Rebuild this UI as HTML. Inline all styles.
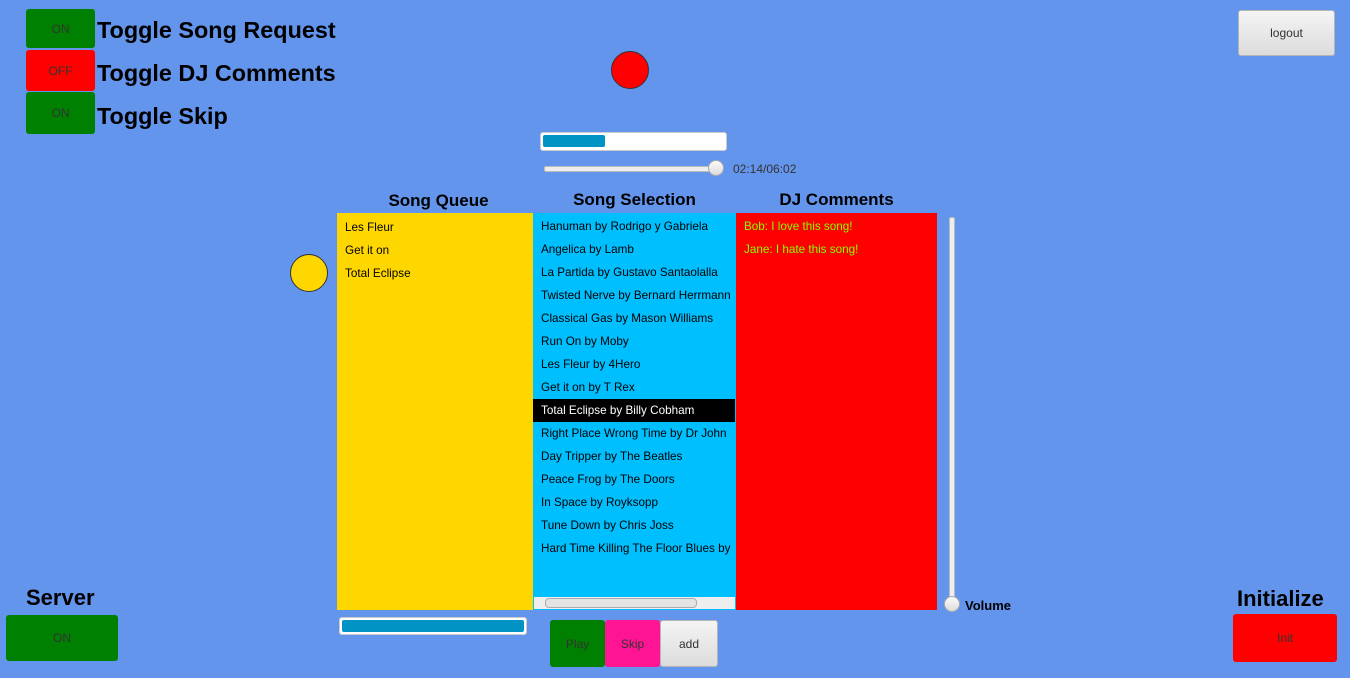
<html><head><style>
body{margin:0;width:1350px;height:678px;background:#6495ED;position:relative;overflow:hidden;font-family:"Liberation Sans",sans-serif}
.a{position:absolute}
.tb{position:absolute;left:26px;width:69px;border-radius:3px;color:#333;font-size:12px;display:flex;align-items:center;justify-content:center}
.tl{position:absolute;left:97px;font-weight:bold;font-size:23.4px;color:#000}
.h{position:absolute;font-weight:bold;font-size:17px;text-align:center}
.list{position:absolute;top:213px;height:397px;font-size:11.7px}
.list div{height:23px;line-height:23px;padding-left:8px;white-space:nowrap;overflow:hidden}
.btn{position:absolute;display:flex;align-items:center;justify-content:center;font-size:12px;color:#333;border-radius:3px}
.gray{background:linear-gradient(#f4f4f4,#dcdcdc);border:1px solid #b5b5b5;box-sizing:border-box}
</style></head><body>
<div class="tb" style="top:9px;height:39px;background:#008000">ON</div>
<div class="tb" style="top:50px;height:41px;background:#f00">OFF</div>
<div class="tb" style="top:92px;height:42px;background:#008000">ON</div>
<div class="tl" style="top:17px">Toggle Song Request</div>
<div class="tl" style="top:60px">Toggle DJ Comments</div>
<div class="tl" style="top:103px">Toggle Skip</div>
<div class="btn gray" style="left:1238px;top:10px;width:97px;height:46px">logout</div>
<div class="a" style="left:611px;top:51px;width:36px;height:36px;border-radius:50%;background:#f00;border:1px solid #333"></div>
<div class="a" style="left:290px;top:254px;width:36px;height:36px;border-radius:50%;background:#ffd700;border:1px solid #333"></div>
<div class="a" style="left:540px;top:132px;width:185px;height:17px;background:#fff;border:1px solid #ccc;border-radius:3px"><div style="margin:2px;width:62px;height:12px;background:#0093c4;border-radius:2px"></div></div>
<div class="a" style="left:544px;top:166px;width:174px;height:4px;background:#eee;border:1px solid #bbb;border-radius:2px"></div>
<div class="a" style="left:708px;top:160px;width:14px;height:14px;border-radius:50%;background:linear-gradient(#fafafa,#ddd);border:1px solid #aaa"></div>
<div class="a" style="left:733px;top:162px;font-size:12px;color:#333">02:14/06:02</div>
<div class="h" style="left:337px;width:203px;top:191px">Song Queue</div>
<div class="h" style="left:533px;width:203px;top:190px">Song Selection</div>
<div class="h" style="left:736px;width:201px;top:190px">DJ Comments</div>
<div class="list" style="left:337px;width:196px;background:#ffd700;padding-top:3px;box-sizing:border-box"><div>Les Fleur</div><div>Get it on</div><div>Total Eclipse</div></div>
<div class="list" style="left:533px;width:203px;background:#00bfff;padding-top:2px;box-sizing:border-box">
<div>Hanuman by Rodrigo y Gabriela</div><div>Angelica by Lamb</div><div>La Partida by Gustavo Santaolalla</div><div>Twisted Nerve by Bernard Herrmann</div><div>Classical Gas by Mason Williams</div><div>Run On by Moby</div><div>Les Fleur by 4Hero</div><div>Get it on by T Rex</div><div style="background:#000;color:#fff;margin-right:1px">Total Eclipse by Billy Cobham</div><div>Right Place Wrong Time by Dr John</div><div>Day Tripper by The Beatles</div><div>Peace Frog by The Doors</div><div>In Space by Royksopp</div><div>Tune Down by Chris Joss</div><div>Hard Time Killing The Floor Blues by</div>
<div class="a" style="left:1px;top:384px;width:201px;height:12px;background:#eee;padding:0"><div style="position:absolute;left:11px;top:1px;width:150px;height:8px;border:1px solid #aaa;border-radius:4px;background:#e4e4e4;padding:0"></div></div>
</div>
<div class="list" style="left:736px;width:201px;background:#f00;color:#7fff00;padding-top:2px;box-sizing:border-box"><div>Bob: I love this song!</div><div>Jane: I hate this song!</div></div>
<div class="a" style="left:949px;top:217px;width:4px;height:384px;background:#eee;border:1px solid #bbb;border-radius:2px"></div>
<div class="a" style="left:944px;top:596px;width:14px;height:14px;border-radius:50%;background:linear-gradient(#fafafa,#ddd);border:1px solid #aaa"></div>
<div class="a" style="left:965px;top:598px;font-weight:bold;font-size:13px">Volume</div>
<div class="a" style="left:339px;top:617px;width:186px;height:16px;background:#fff;border:1px solid #ccc;border-radius:3px"><div style="margin:2px;height:12px;background:#0093c4;border-radius:2px"></div></div>
<div class="btn" style="left:550px;top:620px;width:55px;height:47px;background:#008000">Play</div>
<div class="btn" style="left:605px;top:620px;width:55px;height:47px;background:#ff1493">Skip</div>
<div class="btn gray" style="left:660px;top:620px;width:58px;height:47px">add</div>
<div class="a" style="left:26px;top:585px;font-weight:bold;font-size:22px">Server</div>
<div class="btn" style="left:6px;top:615px;width:112px;height:46px;background:#008000">ON</div>
<div class="a" style="left:1237px;top:586px;font-weight:bold;font-size:22px">Initialize</div>
<div class="btn" style="left:1233px;top:614px;width:104px;height:48px;background:#f00">Init</div>
</body></html>
